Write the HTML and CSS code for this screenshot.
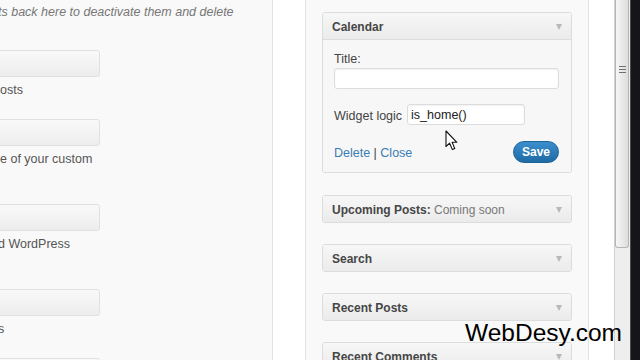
FILE: index.html
```html
<!DOCTYPE html>
<html>
<head>
<meta charset="utf-8">
<link rel="stylesheet" href="styles.css">
</head>
<body>
<div class="screen">
  <div class="avail">
    <p class="intro">ts back here to deactivate them and delete</p>
    <div class="item"><div class="wbox"></div><p class="desc">osts</p></div>
    <div class="item two"><div class="wbox"></div><p class="desc">e of your custom</p></div>
    <div class="item two"><div class="wbox"></div><p class="desc cut">d WordPress</p></div>
    <div class="item"><div class="wbox"></div><p class="desc cut">s</p></div>
    <div class="item"><div class="wbox"></div></div>
  </div>
  <div class="spacer"></div>
  <div class="sidebar">
    <div class="widget open">
      <div class="widget-top"><span class="widget-title">Calendar</span><span class="arrow"></span></div>
      <div class="widget-inside">
        <div class="label">Title:</div>
        <div class="input"></div>
        <div class="logic-row"><span class="label inline">Widget logic</span><div class="input logic">is_home()</div></div>
        <div class="actions">
          <span class="links"><a class="link">Delete</a> | <a class="link">Close</a></span>
          <span class="save">Save</span>
        </div>
      </div>
    </div>
    <div class="widget">
      <div class="widget-top"><span class="widget-title">Upcoming Posts:<span class="in-title"> Coming soon</span></span><span class="arrow"></span></div>
    </div>
    <div class="widget">
      <div class="widget-top"><span class="widget-title">Search</span><span class="arrow"></span></div>
    </div>
    <div class="widget">
      <div class="widget-top"><span class="widget-title">Recent Posts</span><span class="arrow"></span></div>
    </div>
    <div class="widget">
      <div class="widget-top"><span class="widget-title">Recent Comments</span><span class="arrow"></span></div>
    </div>
  </div>
  <div class="gutter"></div>
  <div class="scroll"><div class="thumb"><span class="grip"></span></div></div>
  <div class="edge"></div>
</div>
<svg class="cursor" width="14" height="21" viewBox="0 0 14 21">
  <path d="M1 1 L1 16.5 L4.6 13.2 L7.4 19.6 L9.8 18.6 L7.1 12.3 L11.9 12.3 Z" fill="#fff" stroke="#111" stroke-width="1.1" stroke-linejoin="round"/>
</svg>
<div class="watermark">WebDesy.com</div>
</body>
</html>
```
FILE: styles.css
```css
html, body {
  margin: 0;
  padding: 0;
}
body {
  width: 640px;
  height: 360px;
  overflow: hidden;
  position: relative;
  font-family: "Liberation Sans", Arial, sans-serif;
  background: #fff;
}
.screen {
  display: flex;
  height: 360px;
}
.avail {
  flex: none;
  width: 272px;
  border-right: 1px solid #e3e3e3;
  background: #f9f9f9;
  overflow: hidden;
}
.intro {
  margin: 0 0 30px -2px;
  padding-top: 4px;
  font-size: 12.5px;
  line-height: 16px;
  font-style: italic;
  color: #777;
  white-space: nowrap;
}
.item {
  margin-bottom: 22px;
}
.wbox {
  height: 25px;
  width: 108px;
  margin-left: -10px;
  border: 1px solid #e0e0e0;
  border-radius: 3px;
  background: linear-gradient(#f9f9f9, #ededed);
}
.desc {
  margin: 5px 0 0 0;
  font-size: 12.5px;
  line-height: 16px;
  color: #555;
  white-space: nowrap;
}
.desc.cut {
  margin-left: -2px;
}
.item.two {
  padding-bottom: 15px;
}
.item:not(.two) .desc {
  margin-bottom: -1px;
}
.spacer {
  flex: none;
  width: 32px;
  background: #fff;
}
.sidebar {
  flex: none;
  width: 250px;
  padding: 12px 16px 0;
  border-left: 1px solid #e3e3e3;
  border-right: 1px solid #e3e3e3;
  background: #f9f9f9;
}
.widget {
  border: 1px solid #dcdcdc;
  border-radius: 3px;
  background: #f6f6f6;
  margin-bottom: 21px;
  overflow: hidden;
}
.widget.open {
  margin-bottom: 22px;
}
.widget-top {
  box-sizing: border-box;
  height: 26px;
  display: flex;
  align-items: center;
  justify-content: space-between;
  padding: 2px 9px 0;
  background: linear-gradient(#f7f7f7, #ebebeb);
}
.widget.open .widget-top {
  border-bottom: 1px solid #dcdcdc;
  height: 27px;
}
.widget-title {
  font-size: 12px;
  font-weight: bold;
  color: #464646;
  white-space: nowrap;
}
.in-title {
  font-weight: normal;
  color: #777;
}
.arrow {
  width: 0;
  height: 0;
  margin-top: -1px;
  border-top: 6px solid #b8b8b8;
  border-left: 3.5px solid transparent;
  border-right: 3.5px solid transparent;
}
.widget-inside {
  padding: 11px 12px 9px 11px;
  background: #f7f7f7;
}
.label {
  font-size: 12.5px;
  line-height: 15px;
  padding-top: 1px;
  height: 14px;
  color: #444;
  margin-bottom: 2px;
}
.label.inline {
  margin-bottom: 0;
  padding-top: 3px;
  height: auto;
  white-space: nowrap;
}
.input {
  box-sizing: border-box;
  height: 21px;
  border: 1px solid #dcdcdc;
  border-radius: 3px;
  background: #fff;
  box-shadow: inset 0 1px 2px rgba(0, 0, 0, 0.06);
}
.logic-row {
  display: flex;
  align-items: center;
  gap: 5px;
  margin-top: 15px;
}
.input.logic {
  width: 118px;
  padding: 1px 0 0 3px;
  font-size: 12.5px;
  line-height: 18px;
  color: #222;
}
.actions {
  display: flex;
  justify-content: space-between;
  align-items: center;
  height: 22px;
  margin-top: 16px;
  font-size: 12.5px;
  color: #444;
}
.links {
  padding-top: 2px;
}
.link {
  color: #3a7db3;
}
.save {
  box-sizing: border-box;
  width: 46px;
  height: 22px;
  border: 1px solid #1d6398;
  border-radius: 11px;
  background: linear-gradient(#3b8ecd, #1e6ba5);
  color: #fff;
  font-size: 12px;
  font-weight: bold;
  display: flex;
  align-items: center;
  justify-content: center;
}
.gutter {
  flex: none;
  width: 25px;
  background: #fff;
}
.scroll {
  flex: none;
  width: 15px;
  border-left: 1px solid #d2d2d2;
  background: #eeeeee;
}
.thumb {
  box-sizing: border-box;
  height: 248px;
  margin: 0 1px 0 0;
  border: 1px solid #b5b5b5;
  border-top: none;
  border-radius: 0 0 3px 3px;
  background: linear-gradient(90deg, #f6f6f6, #dddddd);
  padding-top: 66px;
}
.grip {
  display: block;
  width: 7px;
  height: 9px;
  margin-left: 3px;
  background: repeating-linear-gradient(#707070 0 1px, transparent 1px 3px);
}
.edge {
  flex: none;
  box-sizing: border-box;
  width: 10px;
  border-left: 1px solid #4a4a4f;
  background: #15151a;
}
.cursor {
  position: absolute;
  left: 445px;
  top: 130px;
}
.watermark {
  position: absolute;
  left: 465px;
  top: 321px;
  font-size: 24.5px;
  line-height: 24px;
  color: #000;
  white-space: nowrap;
}
```
